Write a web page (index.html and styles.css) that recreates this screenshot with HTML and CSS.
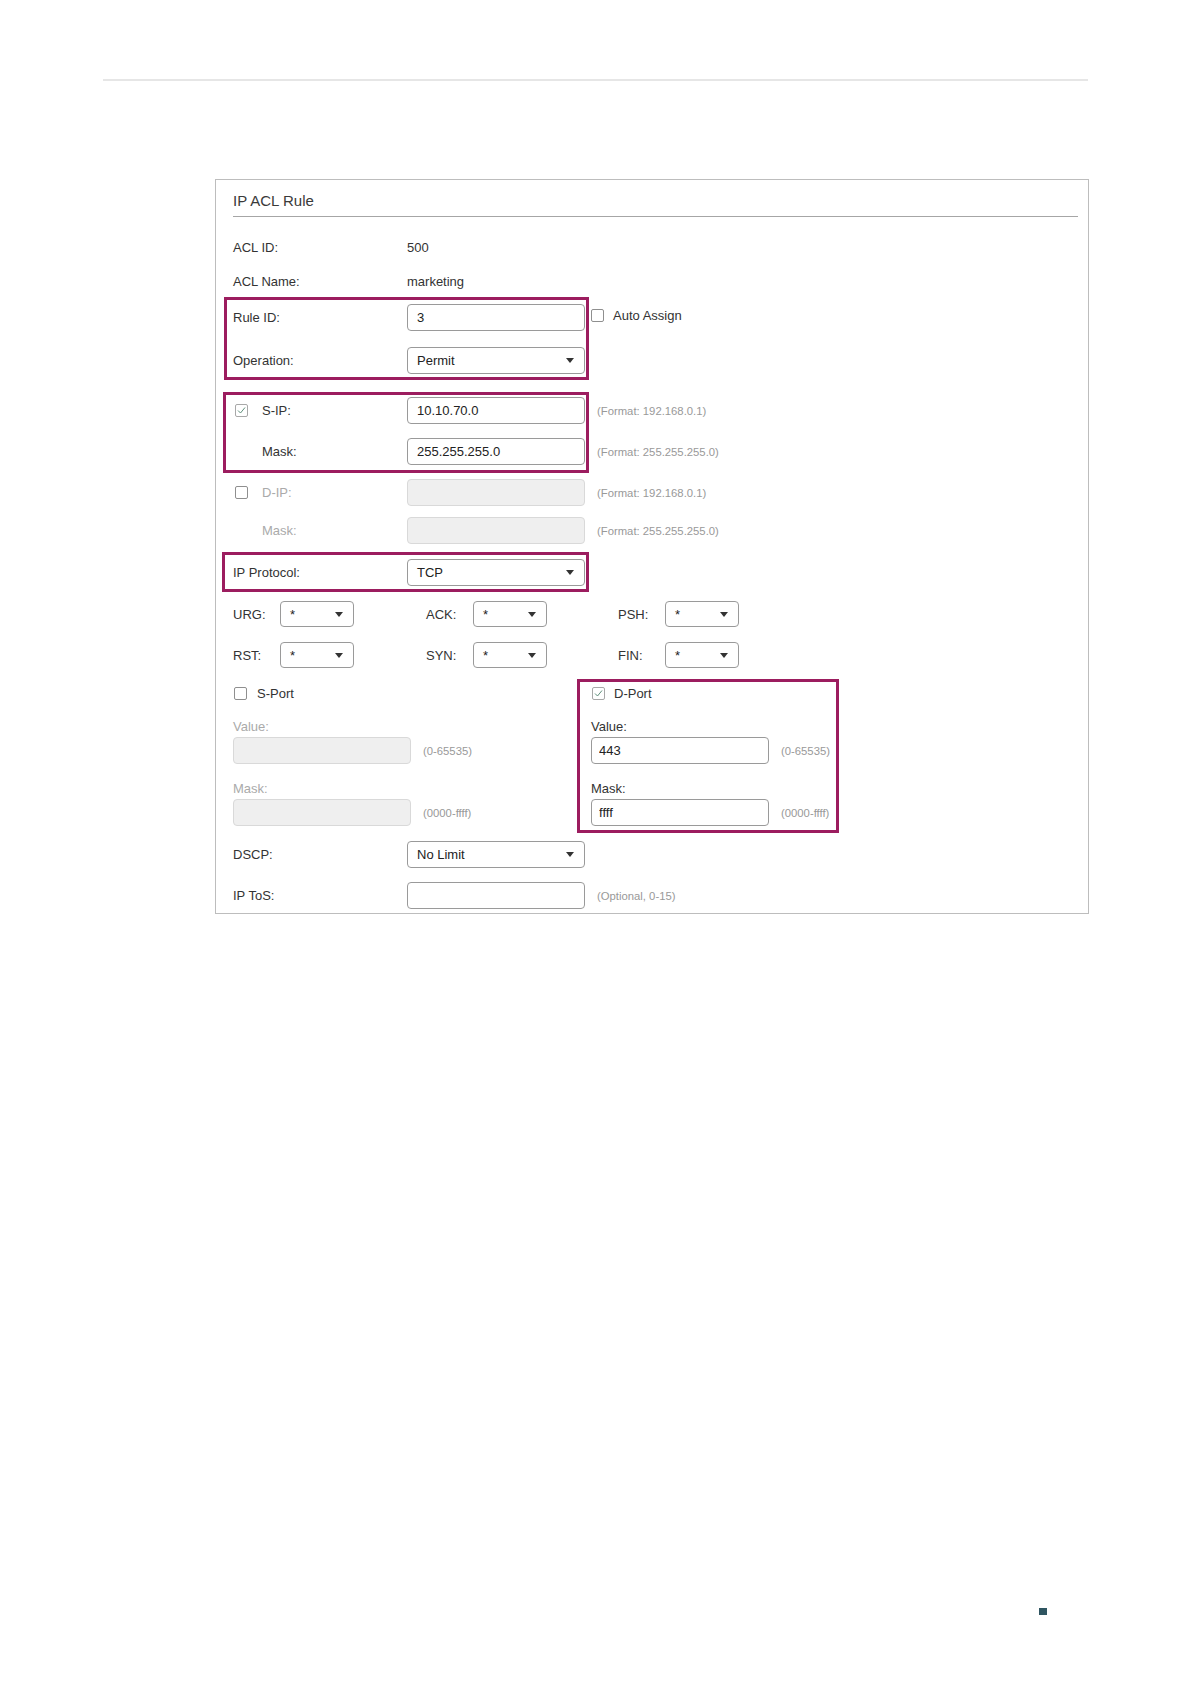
FILE: index.html
```html
<html>
  <head>
    <title>IP ACL Rule</title>
    <meta name="viewport" content="width=device-width, initial-scale=1.0" />
    <link rel="stylesheet" href="styles.css">
  </head>
  <body>
    <div class="top-rule"></div>

    <div class="panel">
      <div class="panel-head">IP ACL Rule</div>

      <div class="row r-id"><span class="lbl">ACL ID:</span><span>500</span></div>
      <div class="row r-name"><span class="lbl">ACL Name:</span><span>marketing</span></div>

      <div class="mark m-rule">
        <div class="row first">
          <span class="lbl">Rule ID:</span>
          <input class="field" type="text" value="3">
          <span class="auto"><span class="cb"></span><span class="auto-txt">Auto Assign</span></span>
        </div>
        <div class="row r-op">
          <span class="lbl">Operation:</span>
          <div class="field select"><span>Permit</span><span class="caret"></span></div>
        </div>
      </div>

      <div class="mark m-sip">
        <div class="row first">
          <span class="lbl lbl-cb">
            <span class="cb on"><svg width="11" height="11" viewBox="0 0 11 11"><polyline points="2,5.5 4.5,8 9,2.5" fill="none" stroke="#5f8f7b" stroke-width="1"/></svg></span>
            <span class="cb-txt">S-IP:</span>
          </span>
          <input class="field" type="text" value="10.10.70.0">
          <span class="hint">(Format: 192.168.0.1)</span>
        </div>
        <div class="row">
          <span class="lbl indent">Mask:</span>
          <input class="field" type="text" value="255.255.255.0">
          <span class="hint">(Format: 255.255.255.0)</span>
        </div>
      </div>

      <div class="row r-dip">
        <span class="lbl lbl-cb off-txt"><span class="cb"></span><span class="cb-txt">D-IP:</span></span>
        <input class="field off" type="text" disabled>
        <span class="hint">(Format: 192.168.0.1)</span>
      </div>
      <div class="row r-dmask">
        <span class="lbl indent off-txt">Mask:</span>
        <input class="field off" type="text" disabled>
        <span class="hint">(Format: 255.255.255.0)</span>
      </div>

      <div class="mark m-proto">
        <div class="row first">
          <span class="lbl">IP Protocol:</span>
          <div class="field select"><span>TCP</span><span class="caret"></span></div>
        </div>
      </div>

      <div class="flags r-urg">
        <div class="flag"><span class="flag-lbl">URG:</span><div class="field select small"><span>*</span><span class="caret"></span></div></div>
        <div class="flag"><span class="flag-lbl">ACK:</span><div class="field select small"><span>*</span><span class="caret"></span></div></div>
        <div class="flag"><span class="flag-lbl">PSH:</span><div class="field select small"><span>*</span><span class="caret"></span></div></div>
      </div>
      <div class="flags r-rst">
        <div class="flag"><span class="flag-lbl">RST:</span><div class="field select small"><span>*</span><span class="caret"></span></div></div>
        <div class="flag"><span class="flag-lbl">SYN:</span><div class="field select small"><span>*</span><span class="caret"></span></div></div>
        <div class="flag"><span class="flag-lbl">FIN:</span><div class="field select small"><span>*</span><span class="caret"></span></div></div>
      </div>

      <div class="ports">
        <div class="port-col">
          <div class="check-row"><span class="cb"></span><span class="port-txt">S-Port</span></div>
          <div class="sub-lbl off-txt">Value:</div>
          <div class="sub-row"><input class="field off" type="text" disabled><span class="hint">(0-65535)</span></div>
          <div class="sub-lbl second off-txt">Mask:</div>
          <div class="sub-row"><input class="field off" type="text" disabled><span class="hint">(0000-ffff)</span></div>
        </div>
        <div class="port-col hl">
          <div class="check-row"><span class="cb on"><svg width="11" height="11" viewBox="0 0 11 11"><polyline points="2,5.5 4.5,8 9,2.5" fill="none" stroke="#5f8f7b" stroke-width="1"/></svg></span><span class="port-txt">D-Port</span></div>
          <div class="sub-lbl">Value:</div>
          <div class="sub-row"><input class="field tight" type="text" value="443"><span class="hint">(0-65535)</span></div>
          <div class="sub-lbl second">Mask:</div>
          <div class="sub-row"><input class="field tight" type="text" value="ffff"><span class="hint">(0000-ffff)</span></div>
        </div>
      </div>

      <div class="row r-dscp">
        <span class="lbl">DSCP:</span>
        <div class="field select"><span>No Limit</span><span class="caret"></span></div>
      </div>
      <div class="row r-tos">
        <span class="lbl">IP ToS:</span>
        <input class="field" type="text">
        <span class="hint">(Optional, 0-15)</span>
      </div>
    </div>

    <div class="page-mark"></div>
  </body>
</html>
```

FILE: styles.css
```css
body {
  margin: 0;
  background-color: #fff;
  font-family: "Liberation Sans", Arial, sans-serif;
  font-size: 13px;
  color: #333;
}

.top-rule {
  margin: 79px 0 0 103px;
  width: 985px;
  height: 2px;
  background-color: #e6e6e6;
}

.panel {
  margin: 98px 0 0 215px;
  width: 874px;
  box-sizing: border-box;
  border: 1px solid #bdbdbd;
  padding: 0 10px 4px 17px;
}
.panel-head {
  font-size: 15px;
  line-height: 20px;
  padding: 11px 0 5px;
  border-bottom: 1px solid #a6a6a6;
  color: #3a3a3a;
}

.row {
  display: flex;
  align-items: center;
  height: 27px;
  margin-top: 14px;
  white-space: nowrap;
}
.row.first {
  margin-top: 0;
}
.r-id { margin-top: 17px; }
.r-name { margin-top: 7px; }
.r-op { margin-top: 16px; }
.r-dip { margin-top: 9px; }
.r-dmask { margin-top: 11px; }
.r-dscp { margin-top: 11px; }
.r-tos { margin-top: 14px; }

.lbl {
  width: 174px;
  flex-shrink: 0;
}
.lbl-cb {
  display: flex;
  align-items: center;
}
.lbl-cb .cb {
  margin-left: 2px;
}
.cb-txt {
  margin-left: 14px;
}
.indent {
  box-sizing: border-box;
  padding-left: 29px;
}
.off-txt {
  color: #aaa;
}

/* highlight frames */
.mark {
  margin-left: -6px;
  width: 359px;
  box-sizing: border-box;
  padding-left: 6px;
  outline: 3px solid #9c1d5f;
}
.m-rule {
  margin-top: 5px;
  padding-top: 4px;
  padding-bottom: 3px;
}
.m-sip {
  margin-top: 18px;
  padding-top: 2px;
  padding-bottom: 5px;
  width: 360px;
  margin-left: -7px;
  padding-left: 7px;
}
.m-proto {
  margin-top: 11px;
  padding-top: 4px;
  padding-bottom: 3px;
  margin-left: -8px;
  padding-left: 8px;
  width: 361px;
}

/* inputs */
.field {
  box-sizing: border-box;
  width: 178px;
  height: 27px;
  margin: 0;
  border: 1px solid #9a9a9a;
  border-radius: 4px;
  padding: 0 9px;
  font-family: inherit;
  font-size: 13px;
  color: #222;
  background-color: #fff;
  flex-shrink: 0;
}
.field.off {
  background-color: #efefef;
  border-color: #d9d9d9;
}
.field.tight {
  padding-left: 7px;
}
.select {
  display: flex;
  align-items: center;
  justify-content: space-between;
  padding-right: 10px;
}
.select.small {
  width: 74px;
  height: 26px;
}
.caret {
  width: 0;
  height: 0;
  border-left: 4px solid transparent;
  border-right: 4px solid transparent;
  border-top: 5px solid #333;
}

.hint {
  margin-left: 12px;
  font-size: 11.3px;
  color: #999;
  white-space: nowrap;
  flex-shrink: 0;
}

/* checkboxes */
.cb {
  display: inline-flex;
  align-items: center;
  justify-content: center;
  width: 13px;
  height: 13px;
  box-sizing: border-box;
  border: 1px solid #8f8f8f;
  border-radius: 2px;
  background-color: #fff;
  flex-shrink: 0;
}
.cb.on {
  border-color: #a8a8a8;
}
.auto {
  display: flex;
  align-items: center;
  align-self: flex-start;
  height: 22px;
  margin-left: 6px;
}
.auto-txt {
  margin-left: 9px;
}

/* tcp flags */
.flags {
  display: grid;
  grid-template-columns: 193px 192px 192px;
  height: 26px;
}
.r-urg { margin-top: 12px; }
.r-rst { margin-top: 15px; }
.flag {
  display: flex;
  align-items: center;
}
.flag-lbl {
  width: 47px;
}

/* ports */
.ports {
  display: flex;
  margin-top: 14px;
}
.port-col {
  width: 347px;
}
.port-col.hl {
  width: 256px;
  box-sizing: border-box;
  padding: 0 0 4px 11px;
  outline: 3px solid #9c1d5f;
}
.check-row {
  display: flex;
  align-items: center;
  height: 22px;
  padding-left: 1px;
}
.port-txt {
  margin-left: 10px;
}
.hl .port-txt {
  margin-left: 9px;
}
.sub-lbl {
  height: 20px;
  line-height: 20px;
  margin-top: 13px;
}
.sub-lbl.second {
  margin-top: 15px;
}
.sub-row {
  display: flex;
  align-items: center;
  height: 27px;
}

.page-mark {
  width: 8px;
  height: 7px;
  margin: 694px 0 0 1039px;
  background-color: #2f5561;
}
```
